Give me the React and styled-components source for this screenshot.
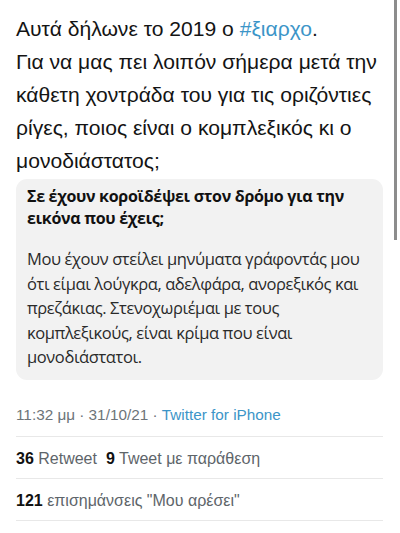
import React from 'react';
import styled, { createGlobalStyle } from 'styled-components';

const GlobalStyle = createGlobalStyle`
  html, body {
    margin: 0;
    padding: 0;
    background: #fff;
    height: 533px;
    overflow: hidden;
  }
`;

function App() {
  return (
    <Page>
      <GlobalStyle />
      <Scrollbar />
      <TweetText>
        Αυτά δήλωνε το 2019 ο <Link>#ξιαρχο</Link>.
        <br />
        Για να μας πει λοιπόν σήμερα μετά την κάθετη χοντράδα του για τις
        οριζόντιες ρίγες, ποιος είναι ο κομπλεξικός κι ο μονοδιάστατος;
      </TweetText>

      <QuoteCard>
        <QuoteTitle>
          Σε έχουν κοροϊδέψει στον δρόμο για την εικόνα που έχεις;
        </QuoteTitle>
        <QuoteBody>
          Μου έχουν στείλει μηνύματα γράφοντάς μου ότι είμαι λούγκρα,
          αδελφάρα, ανορεξικός και πρεζάκιας. Στενοχωριέμαι με τους
          κομπλεξικούς, είναι κρίμα που είναι μονοδιάστατοι.
        </QuoteBody>
      </QuoteCard>

      <MetaRow>
        11:32 μμ · 31/10/21 · <Link>Twitter for iPhone</Link>
      </MetaRow>
      <StatRow>
        <Stat>
          <b>36</b> Retweet
        </Stat>
        <Stat>
          <b>9</b> Tweet με παράθεση
        </Stat>
      </StatRow>
      <StatRow>
        <Stat>
          <b>121</b> επισημάνσεις "Μου αρέσει"
        </Stat>
      </StatRow>

      <ActionBar>
        <ActionIcon viewBox="0 0 24 24">
          <circle cx="12" cy="12" r="9" />
        </ActionIcon>
        <ActionIcon viewBox="0 0 24 24">
          <path d="M4 6h12v8M20 18H8v-8" />
        </ActionIcon>
        <ActionIcon viewBox="0 0 24 24">
          <path d="M12 20s-8-5-8-11a4 4 0 018-1 4 4 0 018 1c0 6-8 11-8 11z" />
        </ActionIcon>
        <ActionIcon viewBox="0 0 24 24">
          <path d="M12 3v12M7 8l5-5 5 5M4 14v6h16v-6" />
        </ActionIcon>
      </ActionBar>
    </Page>
  );
}

const Page = styled.div`
  position: relative;
  width: 400px;
  height: 533px;
  overflow: hidden;
  padding: 12px 17px 0 16px;
  box-sizing: border-box;
  background: #fff;
`;

const Scrollbar = styled.div`
  position: absolute;
  top: 0;
  right: 3px;
  width: 3px;
  height: 240px;
  background: #8c8c8c;
`;

const TweetText = styled.div`
  margin-right: -8px;
  font-family: 'Liberation Sans', Arial, sans-serif;
  font-size: 21.1px;
  line-height: 33px;
  color: #141414;
`;

const Link = styled.span`
  color: #3c95c8;
`;

const QuoteCard = styled.div`
  margin-top: 2px;
  background: #f2f2f2;
  border-radius: 11px;
  padding: 6px 10px 10px 11px;
  font-family: 'Open Sans', 'Noto Sans', sans-serif;
`;

const QuoteTitle = styled.div`
  font-size: 16px;
  font-weight: 700;
  line-height: 22px;
  letter-spacing: -0.3px;
  color: #111;
`;

const QuoteBody = styled.div`
  margin-top: 18px;
  font-size: 16.5px;
  line-height: 24.5px;
  letter-spacing: -0.4px;
  color: #2a2a2a;
`;

const MetaRow = styled.div`
  margin-top: 25px;
  padding-bottom: 11px;
  border-bottom: 1px solid #e8e8e8;
  font-family: 'Liberation Sans', Arial, sans-serif;
  font-size: 15.3px;
  line-height: 20px;
  color: #6d7479;
`;

const StatRow = styled.div`
  display: flex;
  gap: 9px;
  padding: 12px 0 9px;
  border-bottom: 1px solid #e8e8e8;
  font-family: 'Liberation Sans', Arial, sans-serif;
  font-size: 16px;
  line-height: 20px;
  color: #5e656a;
`;

const Stat = styled.span`
  b {
    color: #111;
    font-weight: 700;
  }
`;

const ActionBar = styled.div`
  display: flex;
  justify-content: space-around;
  padding: 11px 20px 0 30px;
`;

const ActionIcon = styled.svg`
  width: 22px;
  height: 22px;
  fill: none;
  stroke: #c4c8cb;
  stroke-width: 1.6;
`;

export default App;
